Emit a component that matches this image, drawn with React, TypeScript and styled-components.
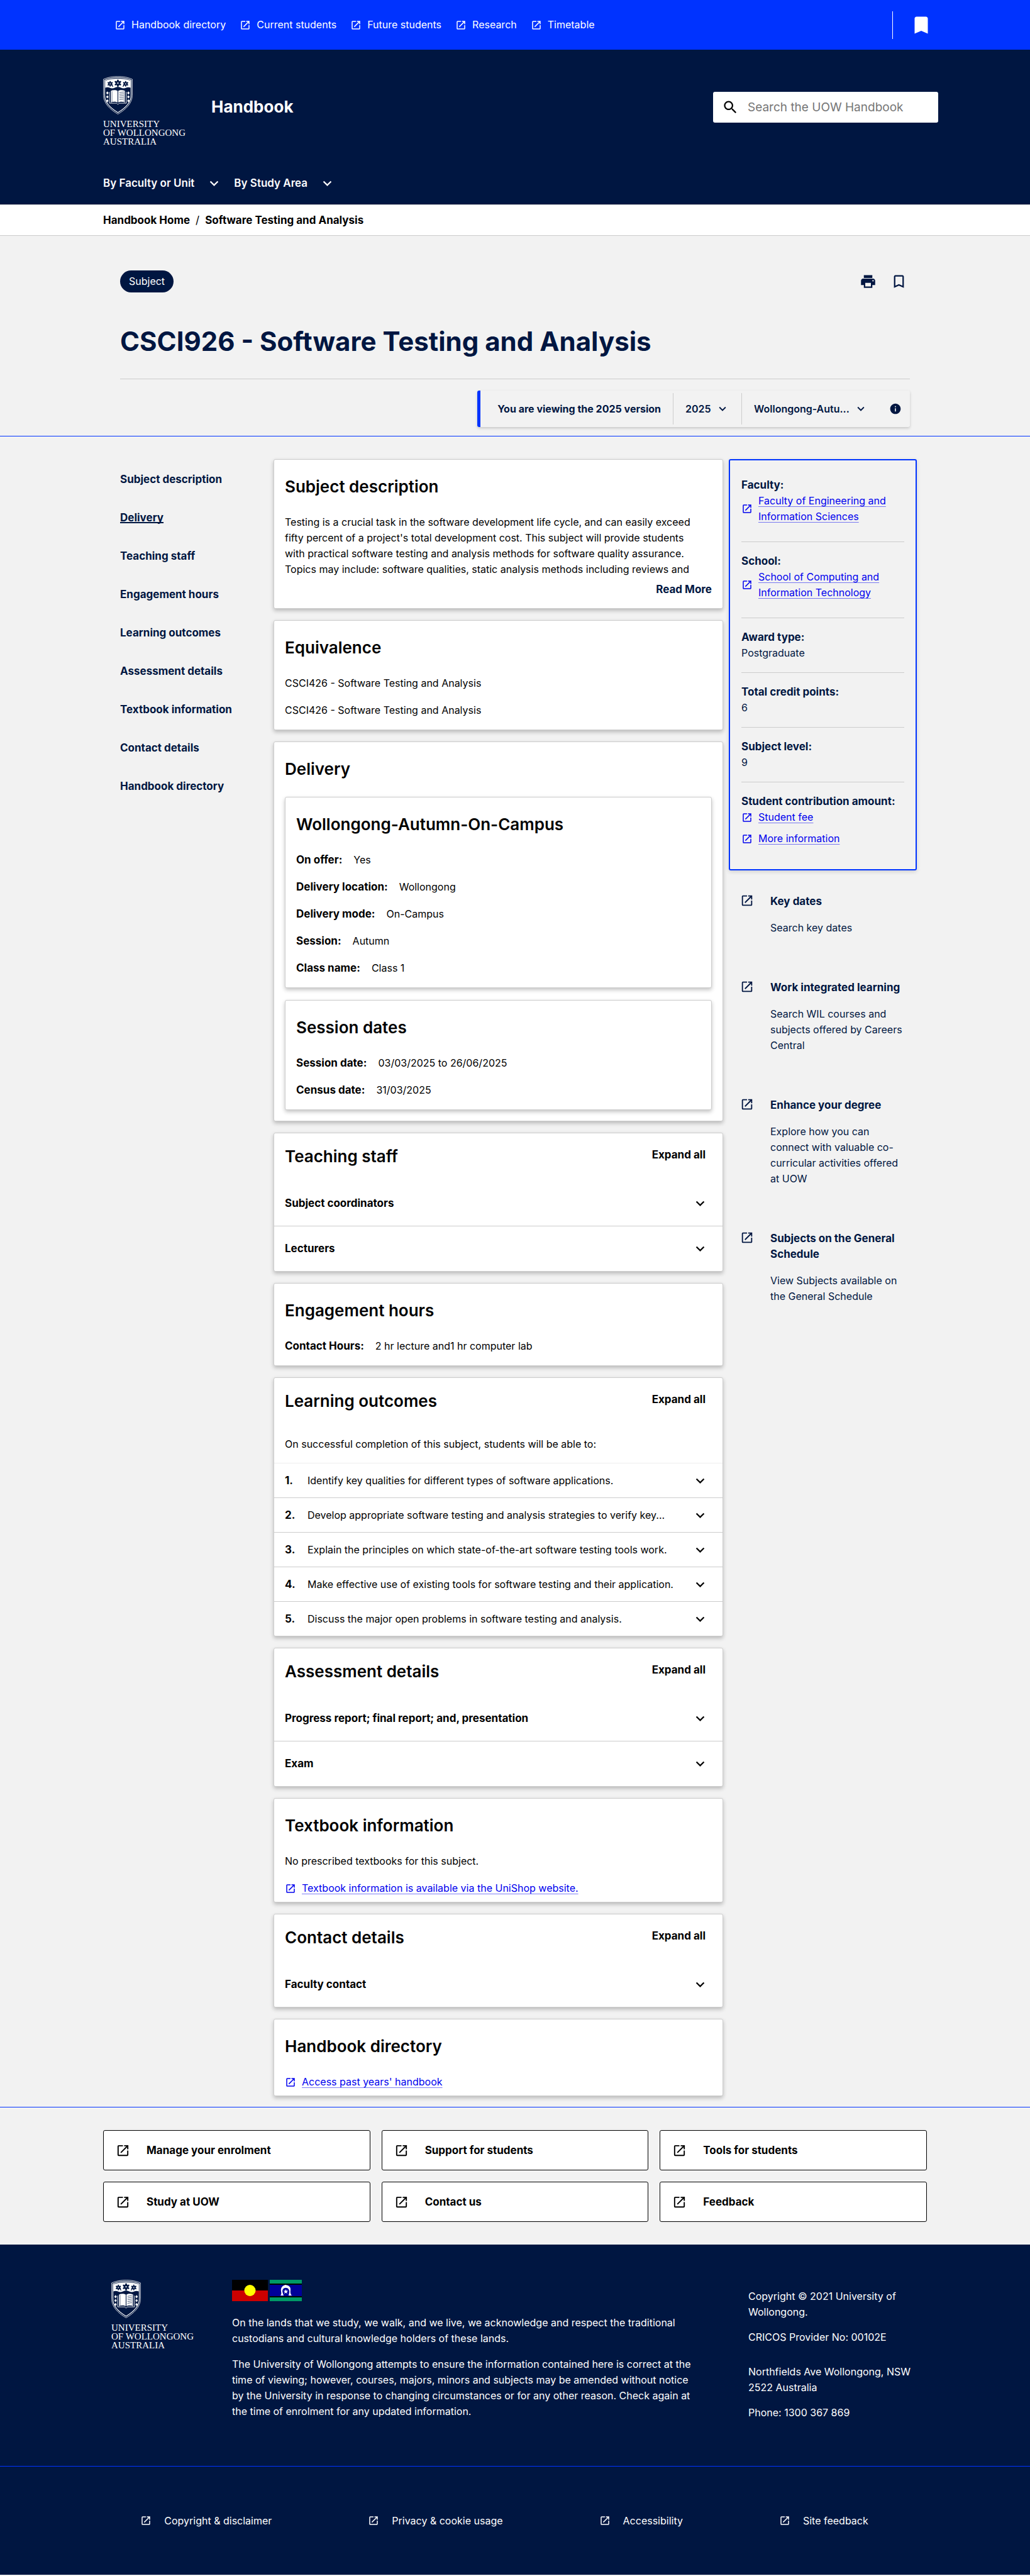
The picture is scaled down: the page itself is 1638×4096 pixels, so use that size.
import React from "react";
import styled, { createGlobalStyle } from "styled-components";

const navy = "#001641";
const blue = "#0033ff";
const grey = "#cccccc";
const paper = "#f2f2f2";
const link = "#0000ee";

const GlobalStyle = createGlobalStyle`
  *, *::before, *::after { box-sizing: border-box; }
  body {
    margin: 0;
    background: ${paper};
    color: #000;
    font-family: Inter, "Open Sans", sans-serif;
    font-size: 16px;
    line-height: 25px;
  }
  h1, h2, h3, p, ul, ol, dl, dd { margin: 0; padding: 0; }
  ul, ol { list-style: none; }
  a { color: inherit; text-decoration: none; }
  button, input, select { font: inherit; color: inherit; }
  button { background: none; border: 0; padding: 0; cursor: pointer; text-align: left; }
`;

/* ---------- icons ---------- */

const Svg = styled.svg<{ $size: number }>`
  display: block;
  flex: none;
  width: ${(p) => p.$size}px;
  height: ${(p) => p.$size}px;
  fill: currentColor;
`;

const shapes = {
  launch:
    "M19 19H5V5h7V3H5a2 2 0 0 0-2 2v14a2 2 0 0 0 2 2h14c1.100 0 2-.9 2-2v-7h-2v7zM14 3v2h3.590l-9.830 9.830 1.410 1.410L19 6.410V10h2V3h-7z",
  expand: "M16.590 8.590L12 13.170 7.410 8.590 6 10l6 6 6-6z",
  bookmark: "M17 3H7c-1.100 0-2 .9-2 2v16l7-3 7 3V5c0-1.100-.9-2-2-2z",
  bookmarkOutline:
    "M17 3H7c-1.100 0-2 .9-2 2v16l7-3 7 3V5c0-1.100-.9-2-2-2zm0 15l-5-2.180L7 18V5h10v13z",
  search:
    "M15.500 14h-.79l-.28-.27C15.410 12.590 16 11.110 16 9.500 16 5.910 13.090 3 9.500 3S3 5.910 3 9.500 5.910 16 9.500 16c1.610 0 3.090-.59 4.230-1.570l.27.28v.79l5 4.990L20.490 19l-4.990-5zm-6 0C7.010 14 5 11.990 5 9.500S7.010 5 9.500 5 14 7.010 14 9.500 11.990 14 9.500 14z",
  print:
    "M19 8H5c-1.660 0-3 1.340-3 3v6h4v4h12v-4h4v-6c0-1.660-1.340-3-3-3zm-3 11H8v-5h8v5zm3-7c-.55 0-1-.45-1-1s.45-1 1-1 1 .45 1 1-.45 1-1 1zm-1-9H6v4h12V3z",
  info: "M12 2C6.480 2 2 6.480 2 12s4.480 10 10 10 10-4.480 10-10S17.520 2 12 2zm1 15h-2v-6h2v6zm0-8h-2V7h2v2z",
};

function Icon({ name, size }: { name: keyof typeof shapes; size: number }) {
  return (
    <Svg $size={size} viewBox="0 0 24 24" aria-hidden="true">
      <path d={shapes[name]} />
    </Svg>
  );
}

/* ---------- crest ---------- */

const LogoBox = styled.a`
  display: block;
  color: #fff;
`;

const Crest = styled.svg`
  display: block;
  width: 47px;
  height: 61px;
  margin-bottom: 8px;
`;

const LogoText = styled.span`
  display: block;
  font-family: "Liberation Serif", serif;
  font-size: 15px;
  line-height: 14px;
  white-space: nowrap;
`;

function Flower({ x, y, s }: { x: number; y: number; s: number }) {
  return (
    <g transform={`translate(${x} ${y}) scale(${s})`} fill={navy}>
      {[0, 60, 120, 180, 240, 300].map((a) => (
        <path key={a} d="M0 0C-3.500 -3-3 -7 0 -9C3 -7 3.500 -3 0 0z" transform={`rotate(${a})`} />
      ))}
      <circle r="1.600" fill="#fff" />
    </g>
  );
}

function Logo() {
  return (
    <LogoBox href="#home">
      <Crest viewBox="0 0 84 109" aria-hidden="true">
        <path d="M1 9C14 3 28 1 42 1s28 2 41 8v45c0 24-20 42-41 54C21 96 1 78 1 54z" fill={navy} stroke="#fff" strokeWidth="1.400" />
        <path d="M4.500 11.500C16 6 29 4.500 42 4.500S68 6 79.500 11.500V54c0 21-18 38-37.500 49.500C22.500 92 4.500 75 4.500 54z" fill="none" stroke="#fff" strokeWidth="2" />
        <path d="M6 13C17 8 29 7 42 7s25 1 36 6v20c-4-2-9-2-13 0-5 3-10 2-14 0-6-3-12-3-18 0-4 2-9 3-14 0-4-2-9-2-13 0z" fill="#fff" />
        <Flower x={42} y={20} s={1.200} />
        <Flower x={20} y={22} s={0.950} />
        <Flower x={64} y={22} s={0.950} />
        <path d="M28 30l-5-6M56 30l5-6M42 33v-8" stroke={navy} strokeWidth="2" />
        <path d="M18 45v32h20c1 0 2 3 4 3s3-3 4-3h20V45" fill="none" stroke="#fff" strokeWidth="1.600" />
        <path d="M22 42c6-3 14-3 19 0v33c-5-3-13-3-19 0z" fill="#fff" />
        <path d="M43 42c5-3 13-3 19 0v33c-6-3-14-3-19 0z" fill="#fff" />
        <path d="M46 47l12-2M46 52l12-2M46 57l12-2M46 62l12-2M46 67l12-2" stroke={navy} strokeWidth="1.200" />
        <path d="M25.500 43v31M59.500 43v31" stroke={navy} strokeWidth="0.800" />
        {[48, 59, 70].map((y) => (
          <g key={y} fill="#fff">
            <path d={`M12 ${y - 4.500}l3.500 4.500-3.500 4.500-3.500-4.500z`} />
            <path d={`M72 ${y - 4.500}l3.500 4.500-3.500 4.500-3.500-4.500z`} />
          </g>
        ))}
      </Crest>
      <LogoText>UNIVERSITY</LogoText>
      <LogoText>OF WOLLONGONG</LogoText>
      <LogoText>AUSTRALIA</LogoText>
    </LogoBox>
  );
}

/* ---------- page header ---------- */

const Container = styled.div`
  width: 100%;
  max-width: 1310px;
  margin: 0 auto;
`;

const TopBar = styled.div`
  background: ${blue};
  color: #fff;
`;

const TopBarInner = styled(Container)`
  display: flex;
  align-items: center;
  justify-content: space-between;
  height: 79px;
  padding-left: 18px;
`;

const TopLinks = styled.ul`
  display: flex;
  gap: 22px;
`;

const IconLink = styled.a<{ $gap: number }>`
  display: flex;
  align-items: center;
  gap: ${(p) => p.$gap}px;
`;

const BookmarkArea = styled.div`
  display: flex;
  align-items: center;
  height: 44px;
  margin-right: -9px;
  padding-left: 27px;
  border-left: 1px solid #fff;
`;

const Header = styled.header`
  background: ${navy};
  color: #fff;
  padding-bottom: 3px;
`;

const Brand = styled(Container)`
  display: flex;
  align-items: center;
  height: 182px;
`;

const BrandLogo = styled.div`
  width: 172px;
  padding-top: 13px;
`;

const SiteName = styled.a`
  flex: 1;
  font-size: 26px;
  font-weight: 700;
  line-height: 34px;
`;

const SearchBox = styled.label`
  display: flex;
  align-items: center;
  gap: 14px;
  width: 358px;
  height: 49px;
  margin-right: -18px;
  padding: 0 14px;
  border-radius: 3px;
  background: #fff;
  color: #000;
`;

const SearchInput = styled.input`
  flex: 1;
  min-width: 0;
  padding: 0;
  border: 0;
  outline: 0;
  background: transparent;
  font-size: 19px;
  &::placeholder { color: #767676; opacity: 1; }
`;

const MainNav = styled(Container).attrs({ as: "nav" })`
  display: flex;
  align-items: center;
  gap: 18px;
  height: 61px;
`;

const NavButton = styled.button`
  display: flex;
  align-items: center;
  gap: 18px;
  font-size: 17px;
  font-weight: 600;
`;

const Crumbs = styled.div`
  background: #fff;
  border: solid ${grey};
  border-width: 1px 0;
`;

const CrumbList = styled(Container)`
  display: flex;
  align-items: center;
  gap: 9px;
  height: 48px;
  font-size: 17px;
  font-weight: 700;
`;

const Slash = styled.span`
  font-weight: 400;
`;

/* ---------- title ---------- */

const TitleBand = styled.section`
  border-bottom: 1px solid ${blue};
`;

const TitleInner = styled(Container)`
  padding: 55px 27px 14px;
  color: ${navy};
`;

const TitleTop = styled.div`
  display: flex;
  align-items: center;
  justify-content: space-between;
`;

const Pill = styled.span`
  padding: 5px 14px;
  border-radius: 18px;
  background: ${navy};
  color: #fff;
`;

const Tools = styled.div`
  display: flex;
  gap: 22px;
  padding-right: 4px;
`;

const Title = styled.h1`
  margin: 54px 0 35px;
  font-size: 42px;
  font-weight: 700;
  line-height: 48px;
`;

const VersionRow = styled.div`
  display: flex;
  justify-content: flex-end;
  padding-top: 18px;
  border-top: 1px solid ${grey};
`;

const VersionBar = styled.div`
  display: flex;
  align-items: stretch;
  height: 58px;
  padding: 4px 0;
  border-left: 5px solid ${blue};
  border-radius: 3px;
  box-shadow: 0 2px 4px rgba(0, 0, 0, 0.180);
`;

const VersionText = styled.span`
  display: flex;
  align-items: center;
  padding: 0 19px 0 27px;
  font-weight: 700;
`;

const Picker = styled.label`
  display: flex;
  align-items: center;
  gap: 7px;
  padding: 0 19px;
  border-left: 1px solid ${grey};
`;

const PickerSelect = styled.select`
  appearance: none;
  padding: 0;
  border: 0;
  outline: 0;
  background: transparent;
  font-weight: 600;
`;

const InfoButton = styled.button`
  display: flex;
  align-items: center;
  padding: 0 13px 0 15px;
`;

/* ---------- main area ---------- */

const Main = styled(Container).attrs({ as: "main" })`
  display: grid;
  grid-template-columns: 244px minmax(0, 1fr) 299px;
  align-items: start;
  padding: 36px 16px 17px 27px;
`;

const SideNav = styled.nav`
  display: grid;
  gap: 36px;
  padding-top: 20px;
  color: ${navy};
  font-size: 17px;
  font-weight: 700;
`;

const SideLink = styled.a<{ $active: boolean }>`
  justify-self: start;
  text-decoration: ${(p) => (p.$active ? "underline 2px" : "none")};
  text-decoration-skip-ink: none;
`;

const Cards = styled.div`
  display: grid;
  gap: 18px;
  margin-right: 9px;
`;

const Card = styled.section<{ $bottom: number }>`
  padding: 26px 17px ${(p) => p.$bottom}px;
  border: 1px solid ${grey};
  border-radius: 3px;
  background: #fff;
  box-shadow: 0 3px 6px rgba(0, 0, 0, 0.240);
`;

const Heading = styled.h2`
  margin-bottom: 27px;
  font-size: 26px;
  font-weight: 600;
  line-height: 34px;
`;

const Description = styled.p`
  padding-right: 22px;
`;

const Stack = styled.div<{ $gap: number }>`
  display: grid;
  gap: ${(p) => p.$gap}px;
`;

const ReadMore = styled.button`
  display: block;
  margin: 7px 0 0 auto;
  color: ${navy};
  font-size: 17px;
  font-weight: 700;
`;

const Facts = styled.dl`
  display: grid;
  gap: 18px;
`;

const Fact = styled.div`
  display: flex;
  gap: 18px;
`;

const FactName = styled.dt`
  font-size: 17px;
  font-weight: 700;
`;

const FoldCard = styled(Card)`
  padding: 0;
`;

const FoldHead = styled.div`
  display: flex;
  justify-content: space-between;
  height: 76px;
  padding: 20px 27px 0 17px;
`;

const ExpandAll = styled.button`
  align-self: flex-start;
  margin-top: 2px;
  font-size: 17px;
  font-weight: 700;
`;

const FoldRow = styled.button<{ $tall: boolean }>`
  display: flex;
  align-items: center;
  justify-content: space-between;
  width: 100%;
  height: ${(p) => (p.$tall ? 71 : 54)}px;
  padding: 0 22px 0 17px;
  font-size: ${(p) => (p.$tall ? 17 : 16)}px;
  font-weight: ${(p) => (p.$tall ? 700 : 400)};
`;

const FoldItem = styled.li`
  & + & { border-top: 1px solid ${grey}; }
`;

const Outcomes = styled.ol`
  border-top: 1px solid #eeeeee;
`;

const OutcomeNumber = styled.b`
  width: 36px;
  font-size: 17px;
`;

const OutcomeText = styled.span`
  flex: 1;
  white-space: nowrap;
`;

const Lead = styled.p`
  padding: 17px;
`;

const TextLink = styled.a<{ $gap: number }>`
  display: flex;
  align-items: center;
  gap: ${(p) => p.$gap}px;
  color: ${link};
  span {
    text-decoration: underline 1px rgba(0, 0, 238, 0.500);
    text-underline-offset: 3px;
  }
`;

/* ---------- right column ---------- */

const Summary = styled.aside`
  padding: 9px 18px;
  border: 2px solid ${blue};
  border-radius: 3px;
  color: ${navy};
  box-shadow: 0 2px 6px rgba(0, 0, 0, 0.150);
`;

const SummaryItem = styled.div`
  padding: 18px 0;
  & + & { border-top: 1px solid ${grey}; }
  h3 { font-size: 17px; font-weight: 700; line-height: 25px; }
  li { margin-bottom: 9px; }
`;

const Promo = styled.a`
  display: grid;
  grid-template-columns: 48px minmax(0, 1fr);
  color: ${navy};
`;

const Promos = styled.div`
  display: grid;
  gap: 70px;
  padding: 37px 18px 0 18px;
`;

const PromoTitle = styled.h3`
  margin-bottom: 17px;
  font-size: 17px;
  font-weight: 700;
  line-height: 25px;
`;

/* ---------- footer ---------- */

const Quick = styled.section`
  border-top: 1px solid ${blue};
`;

const QuickGrid = styled(Container)`
  display: grid;
  grid-template-columns: repeat(3, 1fr);
  gap: 18px;
  padding: 36px 0;
`;

const QuickLink = styled.a`
  display: flex;
  align-items: center;
  gap: 26px;
  height: 64px;
  padding: 0 18px 0 19px;
  border: 1px solid #000;
  border-radius: 3px;
  background: #fff;
  font-size: 17px;
  font-weight: 700;
`;

const Footer = styled.footer`
  background: ${navy};
  color: #fff;
`;

const FooterTop = styled(Container)`
  display: grid;
  grid-template-columns: 192px minmax(0, 1fr) 284px;
  padding: 56px 0 72px 13px;
`;

const Flags = styled.div`
  display: flex;
  gap: 3px;
  margin-bottom: 22px;
`;

const Flag = styled.svg`
  display: block;
  height: 34px;
`;

const Notice = styled.div`
  display: grid;
  gap: 16px;
  padding-right: 77px;
`;

const Address = styled.div`
  display: grid;
  align-content: start;
  gap: 15px;
  padding-top: 14px;
  p:nth-child(3) { margin-top: 15px; }
`;

const FooterBottom = styled.div`
  border-top: 1px solid ${blue};
`;

const FooterLinks = styled(Container)`
  display: flex;
  align-items: center;
  justify-content: center;
  gap: 153px;
  height: 172px;
  padding-right: 34px;
`;

/* ---------- content ---------- */

const topLinks = ["Handbook directory", "Current students", "Future students", "Research", "Timetable"];

const sections = [
  "Subject description",
  "Delivery",
  "Teaching staff",
  "Engagement hours",
  "Learning outcomes",
  "Assessment details",
  "Textbook information",
  "Contact details",
  "Handbook directory",
];

const delivery = [
  ["On offer:", "Yes"],
  ["Delivery location:", "Wollongong"],
  ["Delivery mode:", "On-Campus"],
  ["Session:", "Autumn"],
  ["Class name:", "Class 1"],
];

const dates = [
  ["Session date:", "03/03/2025 to 26/06/2025"],
  ["Census date:", "31/03/2025"],
];

const outcomes = [
  "Identify key qualities for different types of software applications.",
  "Develop appropriate software testing and analysis strategies to verify key...",
  "Explain the principles on which state-of-the-art software testing tools work.",
  "Make effective use of existing tools for software testing and their application.",
  "Discuss the major open problems in software testing and analysis.",
];

const promos = [
  ["Key dates", "Search key dates"],
  ["Work integrated learning", "Search WIL courses and subjects offered by Careers Central"],
  ["Enhance your degree", "Explore how you can connect with valuable co-curricular activities offered at UOW"],
  ["Subjects on the General Schedule", "View Subjects available on the General Schedule"],
];

const quick = ["Manage your enrolment", "Support for students", "Tools for students", "Study at UOW", "Contact us", "Feedback"];

const legal = ["Copyright & disclaimer", "Privacy & cookie usage", "Accessibility", "Site feedback"];

function FactList({ rows }: { rows: string[][] }) {
  return (
    <Facts>
      {rows.map(([name, value]) => (
        <Fact key={name}>
          <FactName>{name}</FactName>
          <dd>{value}</dd>
        </Fact>
      ))}
    </Facts>
  );
}

function FoldHeader({ title }: { title: string }) {
  return (
    <FoldHead>
      <Heading>{title}</Heading>
      <ExpandAll type="button">Expand all</ExpandAll>
    </FoldHead>
  );
}

function Fold({ title, rows }: { title: string; rows: string[] }) {
  return (
    <FoldCard $bottom={0}>
      <FoldHeader title={title} />
      <ul>
        {rows.map((row) => (
          <FoldItem key={row}>
            <FoldRow type="button" $tall>
              {row}
              <Icon name="expand" size={27} />
            </FoldRow>
          </FoldItem>
        ))}
      </ul>
    </FoldCard>
  );
}

function OutLink({ children, gap }: { children: string; gap: number }) {
  return (
    <TextLink href="#link" $gap={gap}>
      <Icon name="launch" size={18} />
      <span>{children}</span>
    </TextLink>
  );
}

function SummaryLinks({ title, links }: { title: string; links: string[] }) {
  return (
    <SummaryItem>
      <h3>{title}</h3>
      <ul>
        {links.map((text) => (
          <li key={text}>
            <OutLink gap={9}>{text}</OutLink>
          </li>
        ))}
      </ul>
    </SummaryItem>
  );
}

export default function App() {
  return (
    <>
      <GlobalStyle />
      <TopBar>
        <TopBarInner>
          <TopLinks>
            {topLinks.map((text) => (
              <li key={text}>
                <IconLink href="#top" $gap={9}>
                  <Icon name="launch" size={18} />
                  {text}
                </IconLink>
              </li>
            ))}
          </TopLinks>
          <BookmarkArea>
            <button type="button" aria-label="Bookmarks">
              <Icon name="bookmark" size={36} />
            </button>
          </BookmarkArea>
        </TopBarInner>
      </TopBar>

      <Header>
        <Brand>
          <BrandLogo>
            <Logo />
          </BrandLogo>
          <SiteName href="#home">Handbook</SiteName>
          <SearchBox>
            <Icon name="search" size={27} />
            <SearchInput type="search" placeholder="Search the UOW Handbook" aria-label="Search the UOW Handbook" />
          </SearchBox>
        </Brand>
        <MainNav>
          <NavButton type="button">
            By Faculty or Unit
            <Icon name="expand" size={27} />
          </NavButton>
          <NavButton type="button">
            By Study Area
            <Icon name="expand" size={27} />
          </NavButton>
        </MainNav>
      </Header>

      <Crumbs>
        <CrumbList>
          <a href="#home">Handbook Home</a>
          <Slash>/</Slash>
          <span>Software Testing and Analysis</span>
        </CrumbList>
      </Crumbs>

      <TitleBand>
        <TitleInner>
          <TitleTop>
            <Pill>Subject</Pill>
            <Tools>
              <button type="button" aria-label="Print">
                <Icon name="print" size={27} />
              </button>
              <button type="button" aria-label="Bookmark">
                <Icon name="bookmarkOutline" size={27} />
              </button>
            </Tools>
          </TitleTop>
          <Title>CSCI926 - Software Testing and Analysis</Title>
          <VersionRow>
            <VersionBar>
              <VersionText>You are viewing the 2025 version</VersionText>
              <Picker>
                <PickerSelect aria-label="Year">
                  <option>2025</option>
                </PickerSelect>
                <Icon name="expand" size={22} />
              </Picker>
              <Picker>
                <PickerSelect aria-label="Offering">
                  <option>Wollongong-Autu...</option>
                </PickerSelect>
                <Icon name="expand" size={22} />
              </Picker>
              <InfoButton type="button" aria-label="Information">
                <Icon name="info" size={20} />
              </InfoButton>
            </VersionBar>
          </VersionRow>
        </TitleInner>
      </TitleBand>

      <Main>
        <SideNav>
          {sections.map((text) => (
            <SideLink key={text} href="#section" $active={text === "Delivery"}>
              {text}
            </SideLink>
          ))}
        </SideNav>

        <Cards>
          <Card $bottom={17}>
            <Heading>Subject description</Heading>
            <Description>
              Testing is a crucial task in the software development life cycle, and can easily exceed fifty percent of a
              project's total development cost. This subject will provide students with practical software testing and
              analysis methods for software quality assurance. Topics may include: software qualities, static analysis
              methods including reviews and
            </Description>
            <ReadMore type="button">Read More</ReadMore>
          </Card>

          <Card $bottom={18}>
            <Heading>Equivalence</Heading>
            <Stack $gap={18}>
              <p>CSCI426 - Software Testing and Analysis</p>
              <p>CSCI426 - Software Testing and Analysis</p>
            </Stack>
          </Card>

          <Card $bottom={17}>
            <Heading>Delivery</Heading>
            <Stack $gap={19}>
              <Card $bottom={18}>
                <Heading as="h3">Wollongong-Autumn-On-Campus</Heading>
                <FactList rows={delivery} />
              </Card>
              <Card $bottom={18}>
                <Heading as="h3">Session dates</Heading>
                <FactList rows={dates} />
              </Card>
            </Stack>
          </Card>

          <Fold title="Teaching staff" rows={["Subject coordinators", "Lecturers"]} />

          <Card $bottom={18}>
            <Heading>Engagement hours</Heading>
            <FactList rows={[["Contact Hours:", "2 hr lecture and1 hr computer lab"]]} />
          </Card>

          <FoldCard $bottom={0}>
            <FoldHeader title="Learning outcomes" />
            <Lead>On successful completion of this subject, students will be able to:</Lead>
            <Outcomes>
              {outcomes.map((text, i) => (
                <FoldItem key={text}>
                  <FoldRow type="button" $tall={false}>
                    <OutcomeNumber>{i + 1}.</OutcomeNumber>
                    <OutcomeText>{text}</OutcomeText>
                    <Icon name="expand" size={27} />
                  </FoldRow>
                </FoldItem>
              ))}
            </Outcomes>
          </FoldCard>

          <Fold title="Assessment details" rows={["Progress report; final report; and, presentation", "Exam"]} />

          <Card $bottom={9}>
            <Heading>Textbook information</Heading>
            <Stack $gap={18}>
              <p>No prescribed textbooks for this subject.</p>
              <OutLink gap={9}>Textbook information is available via the UniShop website.</OutLink>
            </Stack>
          </Card>

          <Fold title="Contact details" rows={["Faculty contact"]} />

          <Card $bottom={9}>
            <Heading>Handbook directory</Heading>
            <OutLink gap={9}>Access past years' handbook</OutLink>
          </Card>
        </Cards>

        <div>
          <Summary>
            <SummaryLinks title="Faculty:" links={["Faculty of Engineering and Information Sciences"]} />
            <SummaryLinks title="School:" links={["School of Computing and Information Technology"]} />
            <SummaryItem>
              <h3>Award type:</h3>
              <p>Postgraduate</p>
            </SummaryItem>
            <SummaryItem>
              <h3>Total credit points:</h3>
              <p>6</p>
            </SummaryItem>
            <SummaryItem>
              <h3>Subject level:</h3>
              <p>9</p>
            </SummaryItem>
            <SummaryLinks title="Student contribution amount:" links={["Student fee", "More information"]} />
          </Summary>
          <Promos>
            {promos.map(([title, text]) => (
              <Promo key={title} href="#more">
                <Icon name="launch" size={22} />
                <div>
                  <PromoTitle>{title}</PromoTitle>
                  <p>{text}</p>
                </div>
              </Promo>
            ))}
          </Promos>
        </div>
      </Main>

      <Quick>
        <QuickGrid>
          {quick.map((text) => (
            <QuickLink key={text} href="#quick">
              <Icon name="launch" size={23} />
              {text}
            </QuickLink>
          ))}
        </QuickGrid>
      </Quick>

      <Footer>
        <FooterTop>
          <Logo />
          <div>
            <Flags>
              <Flag width="57" viewBox="0 0 57 34" role="img" aria-label="Aboriginal flag">
                <path d="M0 0h57v17H0z" fill="#000" />
                <path d="M0 17h57v17H0z" fill="#cc0000" />
                <circle cx="28.500" cy="17" r="9" fill="#ffff00" />
              </Flag>
              <Flag width="51" viewBox="0 0 51 34" role="img" aria-label="Torres Strait Islander flag">
                <path d="M0 0h51v34H0z" fill="#009966" />
                <path d="M0 6h51v22H0z" fill="#000" />
                <path d="M0 8h51v18H0z" fill="#000099" />
                <path d="M17 25c3-3 0-7 1-11 1-3 3-5 7-6 5 1 8 3 8 7 0 3-1 7 2 10h-5c1-4 2-7 0-10-2-3-7-3-9 0-2 3 0 6 1 10z" fill="#fff" />
                <path d="M25.500 15l1 2.600h2.800l-2.200 1.700.8 2.700-2.400-1.600-2.400 1.600.8-2.700-2.200-1.700h2.800z" fill="#fff" />
              </Flag>
            </Flags>
            <Notice>
              <p>
                On the lands that we study, we walk, and we live, we acknowledge and respect the traditional custodians
                and cultural knowledge holders of these lands.
              </p>
              <p>
                The University of Wollongong attempts to ensure the information contained here is correct at the time of
                viewing; however, courses, majors, minors and subjects may be amended without notice by the University
                in response to changing circumstances or for any other reason. Check again at the time of enrolment for
                any updated information.
              </p>
            </Notice>
          </div>
          <Address>
            <p>Copyright © 2021 University of Wollongong.</p>
            <p>CRICOS Provider No: 00102E</p>
            <p>Northfields Ave Wollongong, NSW 2522 Australia</p>
            <p>Phone: 1300 367 869</p>
          </Address>
        </FooterTop>
        <FooterBottom>
          <FooterLinks>
            {legal.map((text) => (
              <IconLink key={text} href="#legal" $gap={20}>
                <Icon name="launch" size={18} />
                {text}
              </IconLink>
            ))}
          </FooterLinks>
        </FooterBottom>
      </Footer>
    </>
  );
}
